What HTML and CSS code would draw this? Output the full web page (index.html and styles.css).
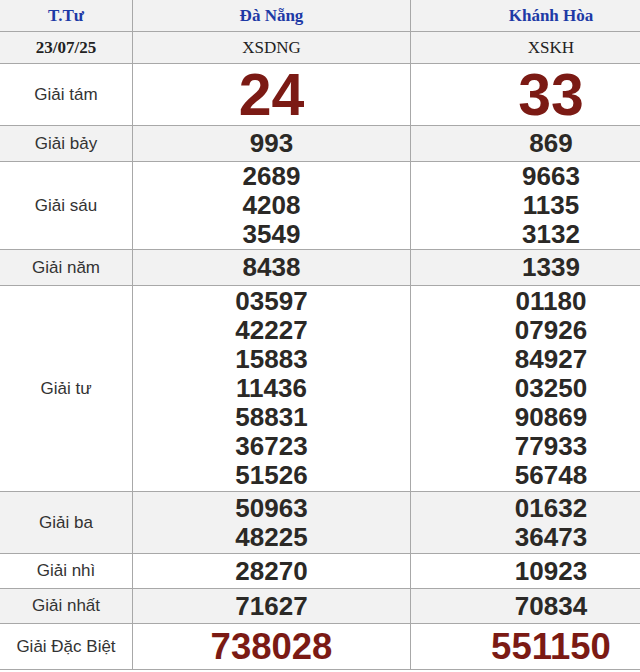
FILE: index.html
```html
<!DOCTYPE html>
<html lang="vi">
<head>
<meta charset="utf-8">
<title>XSMT</title>
<link rel="stylesheet" href="styles.css">
</head>
<body>
<div class="wrap">
<table class="kq">
  <colgroup><col class="c1"><col class="c2"><col class="c3"></colgroup>
  <tr class="r-head gray">
    <th>T.Tư</th><th>Đà Nẵng</th><th>Khánh Hòa</th>
  </tr>
  <tr class="r-date gray">
    <td class="date">23/07/25</td><td class="code">XSDNG</td><td class="code">XSKH</td>
  </tr>
  <tr class="r-8">
    <td class="lbl">Giải tám</td><td class="num big red">24</td><td class="num big red">33</td>
  </tr>
  <tr class="r-7 gray">
    <td class="lbl">Giải bảy</td><td class="num"><div>993</div></td><td class="num"><div>869</div></td>
  </tr>
  <tr class="r-6">
    <td class="lbl">Giải sáu</td>
    <td class="num"><div>2689</div><div>4208</div><div>3549</div></td>
    <td class="num"><div>9663</div><div>1135</div><div>3132</div></td>
  </tr>
  <tr class="r-5 gray">
    <td class="lbl">Giải năm</td><td class="num"><div>8438</div></td><td class="num"><div>1339</div></td>
  </tr>
  <tr class="r-4">
    <td class="lbl">Giải tư</td>
    <td class="num"><div>03597</div><div>42227</div><div>15883</div><div>11436</div><div>58831</div><div>36723</div><div>51526</div></td>
    <td class="num"><div>01180</div><div>07926</div><div>84927</div><div>03250</div><div>90869</div><div>77933</div><div>56748</div></td>
  </tr>
  <tr class="r-3 gray">
    <td class="lbl">Giải ba</td>
    <td class="num"><div>50963</div><div>48225</div></td>
    <td class="num"><div>01632</div><div>36473</div></td>
  </tr>
  <tr class="r-2">
    <td class="lbl">Giải nhì</td><td class="num"><div>28270</div></td><td class="num"><div>10923</div></td>
  </tr>
  <tr class="r-1 gray">
    <td class="lbl">Giải nhất</td><td class="num"><div>71627</div></td><td class="num"><div>70834</div></td>
  </tr>
  <tr class="r-db">
    <td class="lbl">Giải Đặc Biệt</td><td class="num db red">738028</td><td class="num db red">551150</td>
  </tr>
</table>
</div>
</body>
</html>
```
FILE: styles.css
```css
html, body {
  margin: 0;
  padding: 0;
  background: #fff;
}
.wrap {
  width: 640px;
  height: 672px;
  overflow: hidden;
}
.kq {
  border-collapse: collapse;
  table-layout: fixed;
  width: 692px;
  margin: -1px 0 0 -1px;
  font-family: "Liberation Sans", Arial, sans-serif;
  color: #333;
}
.c1 { width: 133px; }
.c2 { width: 278px; }
.c3 { width: 281px; }
.kq th, .kq td {
  border: 1px solid #a8a8a8;
  padding: 0;
  text-align: center;
  vertical-align: middle;
}
.gray { background: #f2f2f2; }
.kq th {
  font-family: "Liberation Serif", "Times New Roman", serif;
  font-weight: bold;
  font-size: 17px;
  color: #1e3aa6;
}
.date {
  font-family: "Liberation Serif", "Times New Roman", serif;
  font-weight: bold;
  font-size: 17px;
  color: #222;
}
.code {
  font-family: "Liberation Serif", "Times New Roman", serif;
  font-size: 17px;
  color: #222;
}
.lbl {
  font-size: 17px;
  color: #333;
}
.num {
  font-weight: bold;
  font-size: 26px;
  color: #2b2926;
  line-height: 29px;
}
.red { color: #7b1a14; }
.big { font-size: 59px; line-height: 60px; }
.db { font-size: 36.5px; line-height: 44px; }
.r-head th { height: 31px; }
.r-date td { height: 31px; }
.r-8 td { height: 61px; }
.r-7 td { height: 35px; }
.r-6 td { height: 87px; }
.r-5 td { height: 35px; }
.r-4 td { height: 205px; }
.r-3 td { height: 61px; }
.r-2 td { height: 34px; }
.r-1 td { height: 34px; }
.r-db td { height: 45px; }
```
